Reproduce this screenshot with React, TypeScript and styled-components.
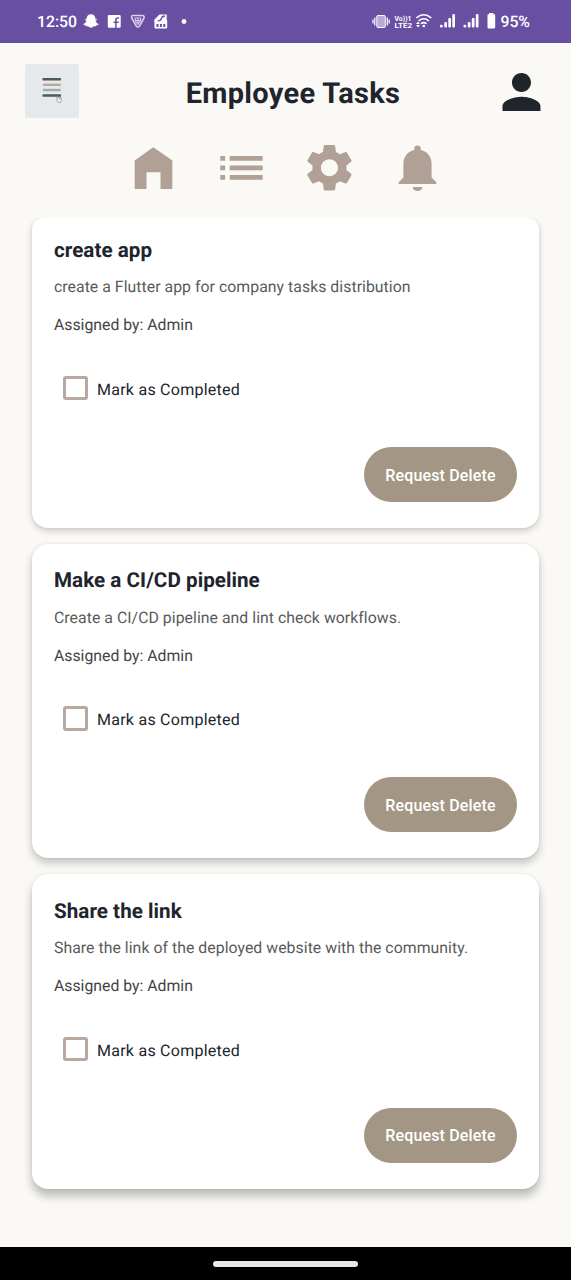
import React from "react";
import styled, { createGlobalStyle } from "styled-components";

const GlobalStyle = createGlobalStyle`
  * { box-sizing: border-box; }
  body { margin: 0; background: #faf9f5; font-family: Roboto, "Liberation Sans", sans-serif; color: #20242c; text-rendering: geometricPrecision; }
  h1, h2, p { margin: 0; }
  svg { display: block; flex: none; }
`;

const Screen = styled.div`
  display: flex;
  flex-direction: column;
  width: 571px;
  height: 1280px;
  background: #faf9f5;
  overflow: hidden;
`;

const StatusBar = styled.header`
  display: flex;
  justify-content: space-between;
  align-items: center;
  height: 43px;
  flex: none;
  padding: 0 41px 0 37px;
  background: #684fa2;
  color: #fff;
`;

const StatusText = styled.span`
  font-size: 15.8px;
  font-weight: 500;
  line-height: 20px;
`;

const StatusGroup = styled.div<{ $gap?: number }>`
  display: flex;
  align-items: center;
  gap: ${(p) => p.$gap ?? 0}px;
`;

const TopBar = styled.div`
  display: flex;
  justify-content: space-between;
  align-items: center;
  height: 96px;
  flex: none;
  padding: 0 30.5px 0 24.5px;
`;

const MenuButton = styled.button`
  display: block;
  width: 54px;
  height: 54px;
  padding: 0;
  border: 0;
  border-radius: 2px;
  background: #e5e9eb;
`;

const PageTitle = styled.h1`
  padding: 5px 0 0 5px;
  font-size: 29px;
  line-height: 36px;
  font-weight: 700;
  white-space: nowrap;
  letter-spacing: 0.3px;
`;

const Nav = styled.nav`
  display: flex;
  align-items: center;
  justify-content: space-between;
  height: 58px;
  flex: none;
  margin: 0 130px;
`;

const TaskList = styled.main`
  display: flex;
  flex-direction: column;
  flex: none;
  gap: 16px;
  height: 1029.5px;
  margin-top: 20.5px;
  padding: 0 32px;
  overflow: hidden;
`;

const TaskCard = styled.article<{ $shade: number; $first?: boolean }>`
  display: flex;
  flex-direction: column;
  flex: none;
  height: ${(p) => (p.$first ? 310.5 : 314.3)}px;
  padding: ${(p) => (p.$first ? 19.2 : 23.3)}px 22px 26px;
  border-radius: ${(p) => (p.$first ? "11px 11px" : "16px 16px")} 16px 16px;
  background: #fff;
  box-shadow: 0 ${(p) => 3 + p.$shade * 2}px ${(p) => 7 + p.$shade * 1.5}px rgba(0, 0, 0, ${(p) => 0.18 + p.$shade * 0.04}),
    0 0 3px rgba(0, 0, 0, 0.08);
`;

const TaskTitle = styled.h2`
  font-size: 20.6px;
  line-height: 28px;
  font-weight: 700;
  letter-spacing: 0.05px;
`;

const Description = styled.p`
  margin-top: 11.7px;
  font-size: 15.8px;
  line-height: 22px;
  letter-spacing: 0.05px;
  color: #5a5a5a;
`;

const Assignee = styled.p`
  margin-top: 16px;
  font-size: 15.8px;
  line-height: 22px;
  color: #444;
`;

const CompletedLabel = styled.label`
  display: flex;
  align-items: center;
  gap: 9.5px;
  height: 26px;
  margin: 38.5px 0 0 9px;
  font-size: 16px;
  line-height: 20px;
  letter-spacing: 0.25px;
`;

const LabelText = styled.span`
  padding-top: 4px;
`;

const CheckBox = styled.span`
  width: 24.5px;
  height: 24.5px;
  border: 3px solid #b8a89f;
  border-radius: 3px;
`;

const DeleteButton = styled.button`
  align-self: flex-end;
  width: 153px;
  height: 55px;
  margin-top: auto;
  padding: 1px 0 0;
  border: 0;
  border-radius: 28px;
  background: #a39684;
  color: #fff;
  font: 500 16px Roboto, "Liberation Sans", sans-serif;
  letter-spacing: 0.15px;
`;

const GestureBar = styled.footer`
  display: flex;
  justify-content: center;
  align-items: center;
  height: 33px;
  flex: none;
  background: #000;
`;

const GestureHandle = styled.div`
  width: 145px;
  height: 6px;
  border-radius: 3px;
  background: #e8e8e8;
`;

const tasks = [
  { title: "create app", text: "create a Flutter app for company tasks distribution" },
  { title: "Make a CI/CD pipeline", text: "Create a CI/CD pipeline and lint check workflows." },
  { title: "Share the link", text: "Share the link of the deployed website with the community." },
];

const NotificationIcons = () => (
  <svg width="112" height="20" viewBox="77 12 112 20" fill="#fff">
    <path d="M91 14.500c-3 0-4.300 1.900-4.100 4.700l-1.600.1c0 .9.600 1.200 1.300 1.600-.5 1.700-1.700 2.600-3.100 3.200.3 1 1.600.9 2.300 1.200.2 1 .9.800 2 .8 1.200 0 1.700 1.400 3.200 1.400s2-1.400 3.200-1.400c1.100 0 1.800.2 2-.8.700-.3 2-.2 2.300-1.200-1.400-.6-2.600-1.500-3.100-3.200.7-.4 1.300-.7 1.300-1.600l-1.600-.1c.2-2.800-1.100-4.700-4.100-4.700Z" stroke="#fff" strokeWidth=".5" />
    <rect x="107.800" y="15" width="12.900" height="12.700" rx="1.200" />
    <path d="M115.900 28v-8q0-1.900 1.800-1.900h1.200M113.700 22.200h5" fill="none" stroke="#684fa2" strokeWidth="1.500" />
    <g fill="none" stroke="#d9cdf0" strokeWidth="1.600" strokeLinejoin="round"><path d="M133 15.500h9.500q2 0 1.500 2.500l-4.500 8q-1.700 2-3.200 0l-4.500-8q-.8-2.500 1.200-2.500Z" /><path d="M135 18h5.800l-.5 3-2.400 3.500-2.400-3.500ZM137.900 18v5M135.500 20.500h4.800" strokeWidth="1.100" /></g>
    <path d="M159.500 14.500h7.200v7.500h-12.200v-2.500Z" />
    <rect x="154.500" y="19.500" width="12.700" height="9" rx="1.300" />
    <path d="M157.800 20.800q3.200 0 3.500-2.200t3.700-2.600" fill="none" stroke="#684fa2" strokeWidth="1.300" />
    <path d="M156.500 24h2v3h-2ZM159.900 24h2v3h-2ZM163.300 24h2v3h-2Z" fill="#684fa2" />
    <circle cx="184" cy="21.500" r="2.400" />
  </svg>
);

const SignalIcons = () => (
  <svg width="124" height="20" viewBox="372.500 12 124 20" fill="#fff">
    <rect x="377.300" y="15.500" width="8.500" height="12" rx="1" fill="#b9a9d7" stroke="#fff" />
    <path d="M375.300 17.500v8M387.800 17.500v8M373.500 19.500v4M389.700 19.500v4" stroke="#fff" strokeWidth="1.200" />
    <g fontFamily="Roboto, sans-serif" fontWeight="700"><text x="395" y="20.800" fontSize="7" textLength="17" lengthAdjust="spacingAndGlyphs">Vo))1</text><text x="395" y="28.200" fontSize="7" textLength="17.500" lengthAdjust="spacingAndGlyphs">LTE2</text></g>
    <g fill="none" stroke="#fff" strokeWidth="1.600"><path d="M416.800 18q7.500-6.500 15 0M419.100 21q5.200-4.500 10.400 0M421.500 23.700q2.800-2.300 5.600 0" /></g>
    <circle cx="424.300" cy="26" r="1.300" /><path d="M418.500 21.500l2 2.500h-4ZM418.500 27.500l-2-2.500h4Z" />
    {[440.500, 464].map((x) => (
      <g key={x}>
        <rect x={x} y="24.800" width="2.700" height="2.700" rx="1" />
        <rect x={x + 4.300} y="22" width="2.700" height="5.500" rx="1" />
        <rect x={x + 8.300} y="18" width="2.700" height="9.500" rx="1" />
        <rect x={x + 12.300} y="14" width="2.700" height="13.500" rx="1" />
      </g>
    ))}
    <path d="M489.500 13h4.500v1.200h.7q1 0 1 1V27q0 1.500-1.500 1.500h-5q-1.200 0-1.200-1.500V15.200q0-1 1-1h.5Z" />
  </svg>
);

const MenuIcon = () => (
  <svg width="54" height="54" viewBox="25 64 54 54" fill="none">
    <path d="M43.500 79.300h16.500M43.500 95.500h16.500" stroke="#4a5b5b" strokeWidth="2.400" strokeLinecap="round" />
    <path d="M43 84.800h17.700" stroke="#bea79a" strokeWidth="2.400" />
    <path d="M43 90h17.700" stroke="#9cadac" strokeWidth="2.400" />
    <path d="M57 97.500v3l1.500 2h2l.7-2v-3l-1.500-.5v2.500M57 97.500h1.700" stroke="#7d8789" strokeWidth=".7" fill="#f4f5f5" />
  </svg>
);

const PersonIcon = () => (
  <svg width="38" height="38" viewBox="3.800 3.600 16 16" overflow="visible" fill="#20242c"><path d="M12 12c2.210 0 4-1.790 4-4s-1.790-4-4-4-4 1.790-4 4 1.790 4 4 4zm0 2c-2.670 0-8 1.340-8 4v2h16v-2c0-2.660-5.330-4-8-4z" /></svg>
);

const NavIcons = () => (
  <>
    <svg width="47" height="56" viewBox="130 140 47 56" fill="#b0a095"><path d="M153.300 147.200L172.300 160.500V189H160.500V172.200H146.500V189H134.700V160.500Z" /></svg>
    <svg width="47" height="56" viewBox="218 140 47 56" fill="#b0a095"><path d="M220.300 156h4.800v4.800h-4.800ZM229.700 156h33v4.800h-33ZM220.300 165.500h4.800v4.800h-4.800ZM229.700 165.500h33v4.800h-33ZM220.300 175h4.800v4.800h-4.800ZM229.700 175h33v4.800h-33Z" /></svg>
    <svg width="47" height="56" viewBox="306 140 47 56" fill="#b0a095"><g transform="translate(301 139.300) scale(2.370)"><path d="M19.140 12.940c.04-.3.060-.61.060-.94 0-.32-.02-.64-.07-.94l2.030-1.580c.18-.14.230-.41.120-.61l-1.920-3.320c-.12-.22-.37-.29-.59-.22l-2.390.96c-.5-.38-1.030-.7-1.620-.94l-.36-2.540c-.04-.24-.24-.41-.48-.41h-3.840c-.24 0-.43.17-.47.41l-.36 2.540c-.59.24-1.130.57-1.620.94l-2.390-.96c-.22-.08-.47 0-.59.22L2.740 8.870c-.12.21-.08.47.12.610l2.030 1.580c-.05.3-.09.63-.09.94s.02.640.070.940l-2.030 1.580c-.18.14-.23.41-.12.610l1.920 3.320c.12.220.37.290.59.220l2.390-.96c.5.380 1.030.70 1.620.94l.36 2.540c.05.240.24.410.48.410h3.840c.24 0 .44-.17.470-.41l.36-2.540c.59-.24 1.130-.56 1.620-.94l2.390.96c.22.080.47 0 .59-.22l1.920-3.320c.12-.22.070-.47-.12-.61l-2.010-1.580zM12 15.600c-1.980 0-3.600-1.620-3.600-3.600s1.620-3.600 3.600-3.600 3.600 1.620 3.600 3.600-1.620 3.600-3.600 3.600z" /></g></svg>
    <svg width="47" height="56" viewBox="394 140 47 56" fill="#b0a095"><path d="M414.300 150v-1.200a3.200 3.200 0 0 1 6.400 0v1.200c7 1.500 10.900 7 10.900 14v13.500l4.700 4.800v1.700h-37.600v-1.700l4.700-4.800V164c0-7 3.900-12.500 10.900-14Z" /><path d="M412.800 187h9.400c0 2.500-2 4-4.700 4s-4.700-1.500-4.700-4Z" /></svg>
  </>
);

export default function App() {
  return (
    <Screen>
      <GlobalStyle />
      <StatusBar>
        <StatusGroup><StatusText>12:50</StatusText><NotificationIcons /></StatusGroup>
        <StatusGroup $gap={4}><SignalIcons /><StatusText>95%</StatusText></StatusGroup>
      </StatusBar>
      <TopBar>
        <MenuButton aria-label="Menu"><MenuIcon /></MenuButton>
        <PageTitle>Employee Tasks</PageTitle>
        <PersonIcon />
      </TopBar>
      <Nav><NavIcons /></Nav>
      <TaskList>
        {tasks.map((t, i) => (
          <TaskCard key={t.title} $shade={i} $first={i === 0}>
            <TaskTitle>{t.title}</TaskTitle>
            <Description>{t.text}</Description>
            <Assignee>Assigned by: Admin</Assignee>
            <CompletedLabel><CheckBox /><LabelText>Mark as Completed</LabelText></CompletedLabel>
            <DeleteButton>Request Delete</DeleteButton>
          </TaskCard>
        ))}
      </TaskList>
      <GestureBar><GestureHandle /></GestureBar>
    </Screen>
  );
}
